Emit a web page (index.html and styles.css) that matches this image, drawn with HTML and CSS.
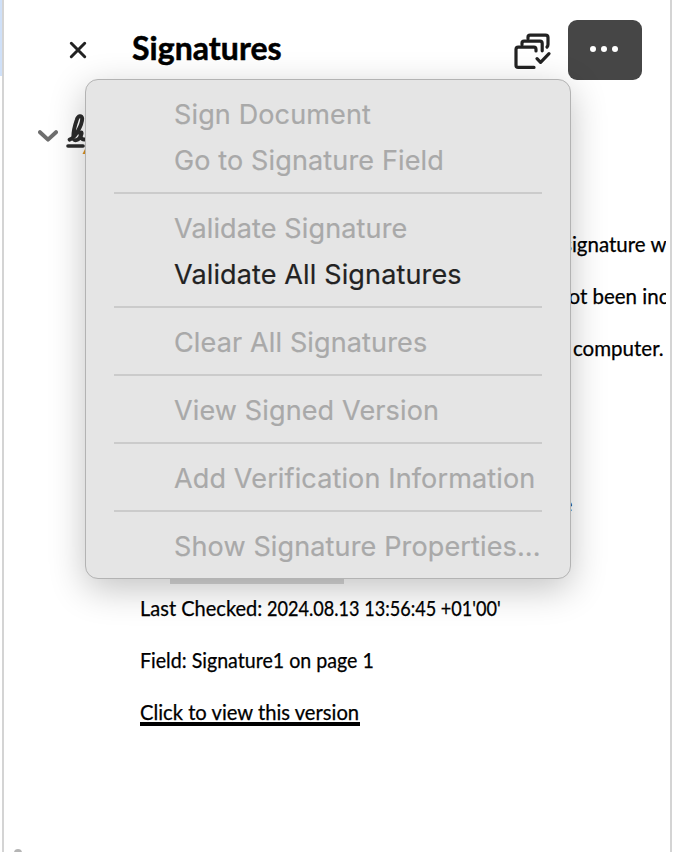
FILE: index.html
```
<!DOCTYPE html>
<html lang="en">
<head>
<meta charset="utf-8">
<title>Signatures</title>
<link rel="stylesheet" href="styles.css">
</head>
<body>
<div class="page">
  <div class="edge"><div class="selection"></div></div>
  <main class="panel">
    <header class="header">
      <svg class="close" width="18" height="18" viewBox="0 0 18 18"><path d="M2.3 2.3 15.7 15.7M15.7 2.3 2.3 15.7"/></svg>
      <h1 class="title">Signatures</h1>
      <svg class="validate" width="38" height="36" viewBox="0 0 38 36"><path d="M14 5.5V4.3Q14 2.2 16 2.2H31.5Q34 2.2 34 4.4V11.5Q34 13 33 14M8 11.5V10.3Q8 8.2 10 8.2H26Q28.2 8.2 28.2 10.4V17.8M20 34.4H4.2Q2 34.4 2 32.2V16.4Q2 14.2 4.2 14.2H20Q22 14.2 22 16.4V18M23 25.6 26.6 29.4 35 20.6"/></svg>
      <button class="more" aria-label="Options"><i></i><i></i><i></i></button>
    </header>
    <div class="signer">
      <svg class="chevron" width="20" height="13" viewBox="0 0 20 13"><path d="M2 2.2 10 9.6 18 2.2"/></svg>
      <svg class="pen" width="26" height="42" viewBox="0 0 26 42"><path class="ink" d="M3.6 25.7C9 23.8 16.2 11.2 16.2 4.6C16 1 12 1.2 10.6 6.3C8.6 12 7.2 20.5 7.4 24.2C8 27.8 13.1 26.5 15.2 20.8C16.6 17.5 14.2 18 14.4 20.5C14.5 24.6 16.7 26.5 21 25"/><path class="rule" d="M2 32H17"/><path class="badge" d="M16.5 40 21 31 26 40Z"/></svg>
    </div>
    <div class="details">
      <p class="line l1">signature w</p>
      <p class="line l2">not been inc</p>
      <p class="line l3">computer.</p>
      <p class="line"></p>
      <p class="line"></p>
      <p class="line l6">e</p>
      <div class="line highlight"><span></span></div>
      <p class="line own"><span class="fit label">Last Checked:</span> <span class="fit date">2024.08.13 13:56:45 +01'00'</span></p>
      <p class="line own"><span class="fit field">Field: Signature1 on page 1</span></p>
      <p class="line own"><a class="link"><span class="fit version">Click to view this version</span></a></p>
    </div>
    <div class="next"></div>
  </main>
  <nav class="menu">
    <div class="item">Sign Document</div>
    <div class="item">Go to Signature Field</div>
    <hr>
    <div class="item">Validate Signature</div>
    <div class="item active">Validate All Signatures</div>
    <hr>
    <div class="item">Clear All Signatures</div>
    <hr>
    <div class="item">View Signed Version</div>
    <hr>
    <div class="item">Add Verification Information</div>
    <hr>
    <div class="item">Show Signature Properties...</div>
  </nav>
</div>
</body>
</html>
```
FILE: styles.css
```
* { box-sizing: border-box; }
body { margin: 0; background: #fff; font-family: Lato, "Noto Sans", sans-serif; }
.page { position: relative; display: flex; width: 674px; height: 852px; overflow: hidden; }
.edge { width: 2px; background: #fff; }
.selection { height: 76px; background: #cfe0f8; }
.panel { width: 670px; height: 852px; border: solid #d4d4d4; border-width: 0 2px; overflow: hidden; }
svg { fill: none; stroke-linecap: round; stroke-linejoin: round; flex: none; }
.header { display: flex; align-items: center; height: 100px; padding: 0 28px 0 65px; }
.close { stroke: #222; stroke-width: 3; }
.title { flex: 1; margin: 0 0 4px 45px; font-size: 32px; line-height: 40px; font-weight: 700; color: #000; letter-spacing: .05px; -webkit-text-stroke: .5px #000; }
.fit { display: inline-block; transform-origin: 0 50%; white-space: nowrap; }
.validate { stroke: #222; stroke-width: 3.2; margin: 2px 16px 0 0; }
.more { width: 74px; height: 60px; border: 0; border-radius: 9px; background: #464646; padding: 0 2px 2px 0; display: flex; align-items: center; justify-content: center; gap: 5px; }
.more i { width: 6px; height: 6px; border-radius: 50%; background: #fff; }
.signer { display: flex; height: 118px; padding: 14px 0 0 34px; }
.chevron { margin-top: 16px; stroke: #6e6e6e; stroke-width: 4; }
.pen { margin-left: 8px; }
.ink { stroke: #2c2c2c; stroke-width: 3.9; }
.rule { stroke: #2c2c2c; stroke-width: 3.6; }
.badge { fill: #df941f; }
.details { width: 662px; overflow: hidden; }
.line { height: 52px; line-height: 52px; margin: 0; font-size: 20.5px; color: #000; white-space: nowrap; overflow: hidden; -webkit-text-stroke: .25px #000; }
.own { padding-left: 136px; }
.l1 { padding-left: 559px; }
.l2 { padding-left: 553px; }
.l3 { padding-left: 569px; }
.l6 { padding-left: 557.5px; }
.highlight { display: flex; align-items: flex-end; padding-left: 166px; height: 54px; margin-bottom: -2px; }
.highlight span { width: 174px; height: 54px; background: #d8d8d8; }
.label { transform: scaleX(.977); }
.date { margin-left: -3px; transform: scaleX(.883); }
.field { transform: scaleX(.957); }
.version { transform: scaleX(.985); }
.link { display: inline-block; width: 220px; height: 40px; border-bottom: 4px solid #000; }
.next { width: 8px; height: 8px; margin: 111px 0 0 10px; border-radius: 50%; background: #b5b5b5; }
.menu { position: absolute; left: 85px; top: 79px; width: 486px; height: 500px; padding: 12px 28px; border: 1px solid #b3b3b3; border-radius: 13px; background: #e5e5e5; box-shadow: 0 10px 36px rgba(0,0,0,.24); font-family: Inter, sans-serif; font-size: 27px; letter-spacing: .14px; color: #a9a9a9; -webkit-text-stroke: .2px; }
.item { height: 46px; line-height: 46px; padding-left: 60px; white-space: nowrap; }
.active { color: #222; }
.menu hr { height: 2px; margin: 8px 0 12px; border: 0; background: #cbcbcb; }
```
